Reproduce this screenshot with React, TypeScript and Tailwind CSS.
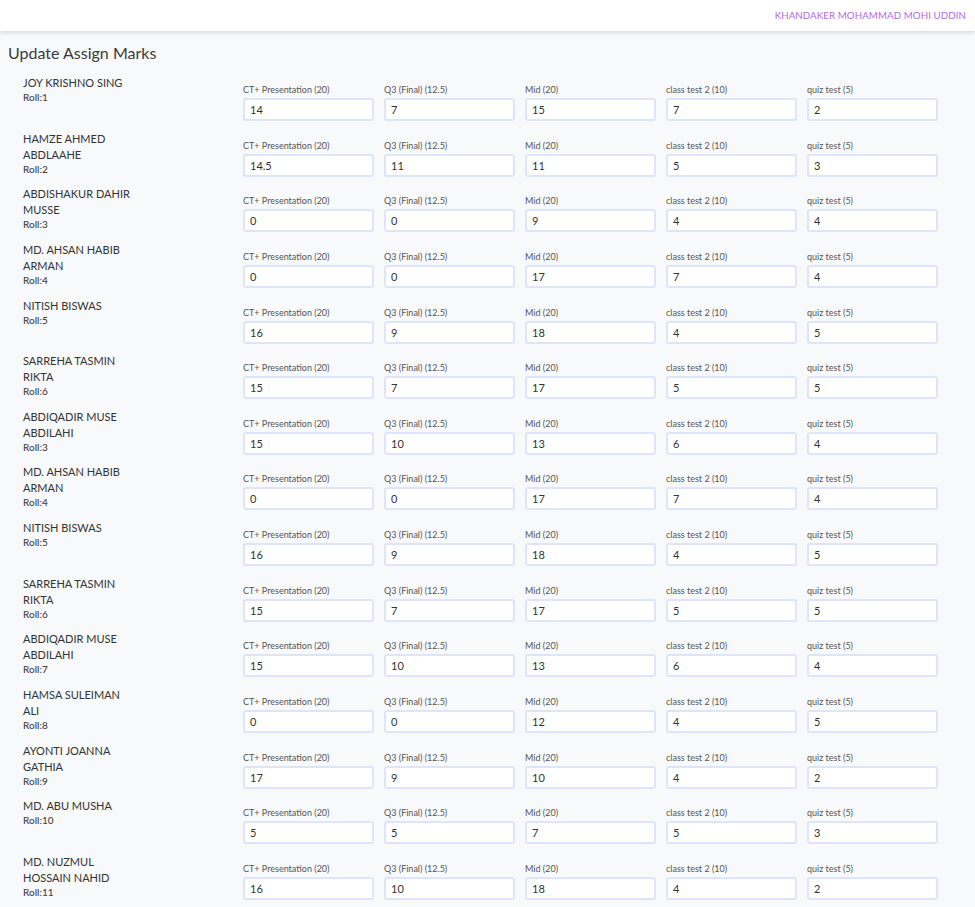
import React from "react";

type Student = { name: string; roll: number; marks: string[] };

const columns = ["CT+ Presentation (20)", "Q3 (Final) (12.5)", "Mid (20)", "class test 2 (10)", "quiz test (5)"];

const students: Student[] = [
  { name: "JOY KRISHNO SING", roll: 1, marks: ["14", "7", "15", "7", "2"] },
  { name: "HAMZE AHMED ABDLAAHE", roll: 2, marks: ["14.5", "11", "11", "5", "3"] },
  { name: "ABDISHAKUR DAHIR MUSSE", roll: 3, marks: ["0", "0", "9", "4", "4"] },
  { name: "MD. AHSAN HABIB ARMAN", roll: 4, marks: ["0", "0", "17", "7", "4"] },
  { name: "NITISH BISWAS", roll: 5, marks: ["16", "9", "18", "4", "5"] },
  { name: "SARREHA TASMIN RIKTA", roll: 6, marks: ["15", "7", "17", "5", "5"] },
  { name: "ABDIQADIR MUSE ABDILAHI", roll: 3, marks: ["15", "10", "13", "6", "4"] },
  { name: "MD. AHSAN HABIB ARMAN", roll: 4, marks: ["0", "0", "17", "7", "4"] },
  { name: "NITISH BISWAS", roll: 5, marks: ["16", "9", "18", "4", "5"] },
  { name: "SARREHA TASMIN RIKTA", roll: 6, marks: ["15", "7", "17", "5", "5"] },
  { name: "ABDIQADIR MUSE ABDILAHI", roll: 7, marks: ["15", "10", "13", "6", "4"] },
  { name: "HAMSA SULEIMAN ALI", roll: 8, marks: ["0", "0", "12", "4", "5"] },
  { name: "AYONTI JOANNA GATHIA", roll: 9, marks: ["17", "9", "10", "4", "2"] },
  { name: "MD. ABU MUSHA", roll: 10, marks: ["5", "5", "7", "5", "3"] },
  { name: "MD. NUZMUL HOSSAIN NAHID", roll: 11, marks: ["16", "10", "18", "4", "2"] },
];

export default function App() {
  return (
    <div className="min-h-screen bg-[#f8f9fb] font-['Lato',sans-serif] text-[#333]">
      {/* top bar */}
      <header className="h-[31px] bg-white shadow-[0_2px_4px_rgba(0,0,0,0.12)] flex items-center justify-end pr-[9px]">
        <span className="text-[9.7px] text-[#b36ae9] tracking-[0.1px]">KHANDAKER MOHAMMAD MOHI UDDIN</span>
      </header>

      <h2 className="pl-[8px] pt-[12px] text-[16px] leading-[20px] text-[#3a3a3a]">Update Assign Marks</h2>

      <div className="pt-[12px]">
        {students.map((s, idx) => (
          <div key={idx} className="h-[55.65px] flex">
            <div className="w-[220px] pl-[23px]">
              <div className="w-[109px] text-[11px] leading-[16px] text-[#333]">{s.name}</div>
              <div className="text-[10px] leading-[13px] font-medium text-[#444]">Roll:{s.roll}</div>
            </div>
            <div className="grid grid-cols-5 gap-[10px] w-[695px] ml-[23px] pt-[9px]">
              {columns.map((c, i) => (
                <label key={i} className="flex flex-col">
                  <span className="text-[9px] leading-[12px] text-[#555] mb-[2px]">{c}</span>
                  <input
                    defaultValue={s.marks[i]}
                    className="h-[23px] w-full bg-white border-2 border-[#dde4fb] rounded-[3px] px-[5px] text-[11px] text-[#333] outline-none"
                  />
                </label>
              ))}
            </div>
          </div>
        ))}
      </div>
    </div>
  );
}
